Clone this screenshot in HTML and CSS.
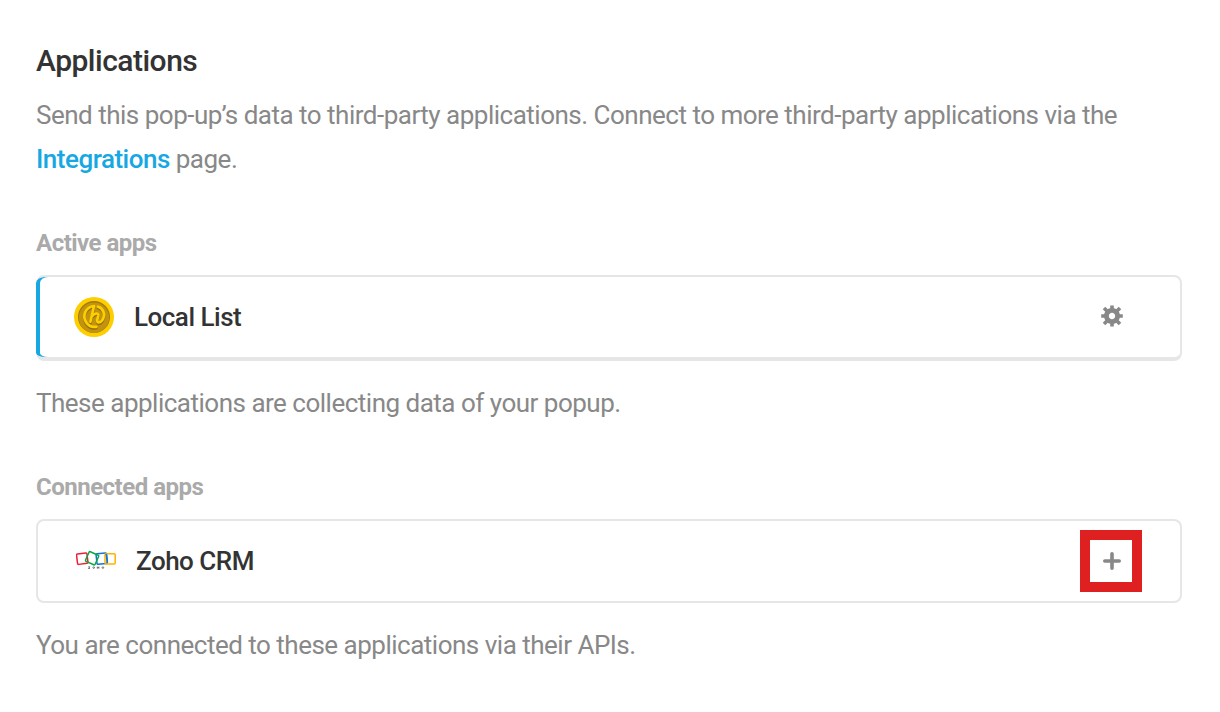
FILE: index.html
```
<!DOCTYPE html>
<html lang="en">
<head>
<meta charset="utf-8">
<title>Applications</title>
<link rel="stylesheet" href="styles.css">
</head>
<body>
<main class="settings">
  <h1 class="title">Applications</h1>
  <p class="description">Send this pop-up’s data to third-party applications. Connect to more third-party applications via the <a class="link" href="#">Integrations</a> page.</p>

  <section class="group">
    <h2 class="label">Active apps</h2>
    <div class="app app-active">
      <svg class="logo" viewBox="0 0 40 40" aria-hidden="true">
        <circle cx="20" cy="20" r="20" fill="#fdce00"/>
        <circle cx="20" cy="20" r="16" fill="#a07810"/>
        <circle cx="20" cy="20.800" r="15.200" fill="#c1930f"/>
        <g fill="none" stroke-linecap="round" stroke-linejoin="round" stroke-width="2.700">
          <path stroke="#936e0c" d="M12.800 26.300C7.500 19 11.500 10 20 9L16.400 24.700M17.800 19.500C20.500 15.800 25 15.400 24.200 19L23.200 22.800C22.800 26 26 26.300 28.200 23.300C32 17.500 29 10.800 24 9.700M12.800 26.300C15 29.300 18.500 30.300 22.300 29.800" transform="translate(0 1.400)"/>
          <path stroke="#fdce00" d="M12.800 26.300C7.500 19 11.500 10 20 9L16.400 24.700M17.800 19.500C20.500 15.800 25 15.400 24.200 19L23.200 22.800C22.800 26 26 26.300 28.200 23.300C32 17.500 29 10.800 24 9.700M12.800 26.300C15 29.300 18.500 30.300 22.300 29.800"/>
        </g>
      </svg>
      <span class="name">Local List</span>
      <button class="action" aria-label="Configure">
        <svg class="gear" viewBox="-11 -11 22 22" aria-hidden="true">
          <g fill="none" stroke="#888">
            <circle r="5.600" stroke-width="4.800"/>
            <path stroke-width="3.600" d="M0-7V-10.600M0 7V10.600M-7 0H-10.800M7 0H10.800M-5-5L-8-8M5-5L8-8M-5 5L-8 8M5 5L8 8"/>
          </g>
        </svg>
      </button>
    </div>
    <p class="hint">These applications are collecting data of your popup.</p>
  </section>

  <section class="group">
    <h2 class="label">Connected apps</h2>
    <div class="app">
      <svg class="logo" viewBox="0 0 40 40" aria-hidden="true">
        <g fill="none" stroke-width="1.500" stroke-linejoin="round" transform="translate(0 -.6)">
          <rect x="1" y="13" width="10.500" height="10.500" rx="1" stroke="#f01c33" transform="rotate(-7 6.200 18.200)"/>
          <rect x="20.500" y="13" width="10.500" height="10.500" rx="1" stroke="#1276d0" transform="rotate(-6 25.700 18.200)"/>
          <rect x="10.800" y="12.600" width="10.500" height="10.500" rx="1" stroke="#0aa647" transform="rotate(24 16 18)"/>
          <rect x="29" y="13.300" width="10.200" height="10.200" rx="1" stroke="#ffb300"/>
          <path stroke="#1276d0" d="M30.200 13.500L31.400 22.500"/>
        </g>
        <g fill="none" stroke="#555" stroke-width=".8" transform="translate(0 -.9)">
          <path d="M12.300 26.700H13.900L12.400 28.400H14M21.300 26.500V28.600M22.900 26.500V28.600M21.300 27.500H22.900"/>
          <circle cx="17.700" cy="27.500" r=".8"/>
          <circle cx="26.900" cy="27.500" r=".8"/>
        </g>
      </svg>
      <span class="name">Zoho CRM</span>
      <button class="action action-marked" aria-label="Connect">
        <svg class="plus" viewBox="0 0 18 18" aria-hidden="true">
          <path fill="none" stroke="#888" stroke-width="3.600" stroke-linecap="round" d="M9 1.800V16.200M1.800 9H16.200"/>
        </svg>
      </button>
    </div>
    <p class="hint">You are connected to these applications via their APIs.</p>
  </section>
</main>
</body>
</html>
```
FILE: styles.css
```
* {
  box-sizing: border-box;
}

body {
  margin: 0;
  background: #fff;
  color: #888;
  font: 400 26px/44px Roboto, sans-serif;
  letter-spacing: -0.5px;
}

.settings {
  padding: 31px 38px 0 36px;
}

.title {
  margin: 0 0 2px;
  color: #333;
  font-size: 30px;
  font-weight: 500;
  line-height: 60px;
}

.description,
.hint {
  margin: 0;
}

.link {
  color: #17a8e3;
  font-weight: 500;
  text-decoration: none;
}

.group {
  margin-top: 40px;
}

.label {
  margin: 0 0 10px;
  color: #aaa;
  font-size: 24px;
  font-weight: 700;
  line-height: 44px;
}

.app {
  display: flex;
  align-items: center;
  height: 84px;
  margin-bottom: 20px;
  padding: 0 38px;
  border: 2px solid #e6e6e6;
  border-radius: 8px;
}

.app-active {
  height: 86px;
  border-bottom-width: 4px;
  border-left: 0;
  box-shadow: inset 4px 0 0 #17a8e3;
}

.logo {
  width: 40px;
  height: 40px;
  margin-right: 20px;
}

.name {
  flex: 1;
  color: #333;
  font-weight: 500;
}

.action {
  display: flex;
  align-items: center;
  justify-content: center;
  width: 62px;
  height: 62px;
  padding: 0 0 2px 2px;
  border: 0;
  background: none;
}

.action-marked {
  padding-bottom: 1px;
  border: 10px solid #df2020;
}

.gear {
  width: 22px;
  height: 22px;
}

.plus {
  width: 18px;
  height: 18px;
}
```
